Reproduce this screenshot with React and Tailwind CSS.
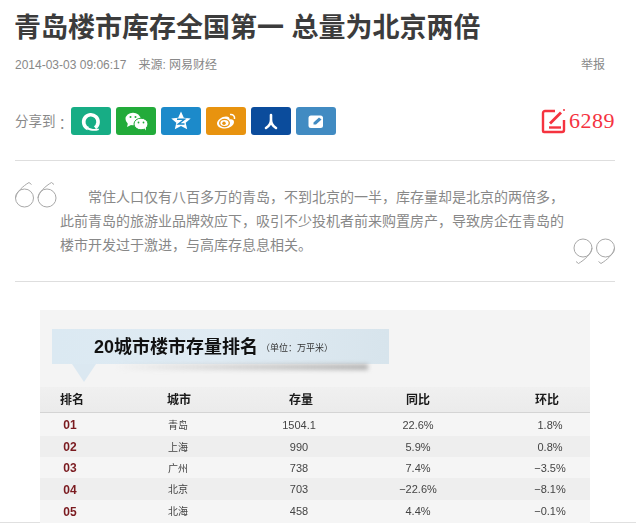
import React from 'react'

const rows = [
  ['01', '青岛', '1504.1', '22.6%', '1.8%', 'h-[23px] pt-px bg-[#f5f5f5]'],
  ['02', '上海', '990', '5.9%', '0.8%', 'h-[21px] pt-px bg-[#eeeeee]'],
  ['03', '广州', '738', '7.4%', '−3.5%', 'h-[21px] pt-px bg-[#f5f5f5]'],
  ['04', '北京', '703', '−22.6%', '−8.1%', 'h-[22px] pt-px bg-[#eeeeee]'],
  ['05', '北海', '458', '4.4%', '−0.1%', 'h-[23px] bg-[#f5f5f5]'],
]

const ShareIcons = [
  {
    bg: 'bg-[#17ad85]',
    icon: (
      <>
        <path d="M17 21.500A7.200 7.200 0 1 1 24 20.800" fill="none" stroke="#fff" strokeWidth="3.600" />
        <path d="M17 20c3 2.200 7 2.600 10.500 1.500l.5 1.500c-4 1.400-8.500 1-11.500-.5z" fill="#fff" />
      </>
    ),
  },
  {
    bg: 'bg-[#22ab3a]',
    icon: (
      <>
        <ellipse cx="17" cy="12" rx="7.500" ry="6.300" fill="#fff" />
        <path d="M12 16l-1 4 4-2z" fill="#fff" />
        <circle cx="14.500" cy="10" r="1" fill="#22ab3a" />
        <circle cx="19.500" cy="10" r="1" fill="#22ab3a" />
        <ellipse cx="25" cy="17" rx="7" ry="5.800" fill="#fff" stroke="#22ab3a" />
        <path d="M28 21l2 2.500-.2-4z" fill="#fff" />
        <circle cx="22.500" cy="15.500" r=".9" fill="#22ab3a" />
        <circle cx="27.500" cy="15.500" r=".9" fill="#22ab3a" />
      </>
    ),
  },
  {
    bg: 'bg-[#1c8aca]',
    icon: (
      <>
        <path d="M20 4.500l2.800 6.200 6.900.7-5 4.300 1.500 6.600-6.200-3.400-6.200 3.400 1.500-6.600-5-4.300 6.900-.7z" fill="#fff" />
        <path d="M16 12.300h7.500l-6 4.700h6" fill="none" stroke="#1c8aca" strokeWidth="1.500" />
      </>
    ),
  },
  {
    bg: 'bg-[#e8930f]',
    icon: (
      <>
        <path d="M11 16.500c0-3.500 5-7 9-7 3 0 4 1.500 3.500 3 2.500-.5 4.500.3 4.500 2.500 0 3.500-4.500 6.500-9 6.500-4.500 0-8-2-8-5z" fill="#fff" />
        <ellipse cx="18.500" cy="16" rx="4.800" ry="3.600" fill="none" stroke="#e8930f" strokeWidth="1.300" />
        <circle cx="18" cy="16.200" r="1.700" fill="#e8930f" />
        <path d="M24 7.500c3-.5 5 1.500 4.500 4.500" fill="none" stroke="#fff" strokeWidth="1.500" />
      </>
    ),
  },
  {
    bg: 'bg-[#0b4c9c]',
    icon: (
      <path d="M20 8v5c0 3-2 6-5 8M20 13c0 3 2 6 5 8" fill="none" stroke="#fff" strokeWidth="2.600" strokeLinecap="round" />
    ),
  },
  {
    bg: 'bg-[#418bc2]',
    icon: (
      <>
        <rect x="12.500" y="8.500" width="14.500" height="12.500" rx="2.500" fill="#fff" />
        <path d="M17.500 15.500l5.500-5 2.500 2-5.500 5h-2.500z" fill="#418bc2" />
      </>
    ),
  },
]

function Quote({ flip }) {
  return (
    <svg
      width="42"
      height="26"
      viewBox="0 0 42 26"
      fill="none"
      stroke="#a8a8a8"
      strokeWidth="1"
      className={flip ? 'rotate-180' : ''}
    >
      <circle cx="9.500" cy="16" r="9" />
      <path d="M.5 16C1.500 10 8 4 14 .5l2.500 2" />
      <circle cx="32" cy="16" r="9" />
      <path d="M23 16C24 10 30.500 4 36.500 .5l2.500 2" />
    </svg>
  )
}

export default function App() {
  return (
    <div
      className="relative h-[523px] overflow-hidden bg-white pl-[15px] pr-[21px] pt-[9px] text-[#888]"
      style={{ fontFamily: '"Liberation Sans", "Noto Sans CJK SC", sans-serif' }}
    >
      <div className="absolute bottom-0 left-0 right-0 h-px bg-[#e0e0e0]" />

      <h1 className="-ml-px text-[27px] leading-[38px] font-bold text-[#3c3c3c] whitespace-nowrap">
        青岛楼市库存全国第一 总量为北京两倍
      </h1>

      <div className="mt-2 flex h-5 items-center justify-between text-xs leading-5">
        <div>
          <span>2014-03-03 09:06:17</span>
          <span className="ml-3">来源: 网易财经</span>
        </div>
        <span className="mr-[10px]">举报</span>
      </div>

      <div className="mt-8 flex h-7 items-center">
        <span className="w-[56px] whitespace-nowrap text-[13.500px]">
          分享到<span className="inline-block translate-y-[3px]" style={{ fontFamily: '"Noto Sans CJK TC", sans-serif' }}>：</span>
        </span>
        <div className="flex gap-[5px]">
          {ShareIcons.map((s, i) => (
            <div key={i} className={`h-7 w-10 rounded-[3px] ${s.bg}`}>
              <svg width="40" height="28" viewBox="0 0 40 28">{s.icon}</svg>
            </div>
          ))}
        </div>
        <div className="ml-auto flex items-center gap-[3px] text-[#f5333f]">
          <svg width="25" height="26" viewBox="0 0 25 26" fill="none" stroke="#f5333f" strokeWidth="2.400">
            <path d="M14 3H4a2 2 0 0 0-2 2v18a1 1 0 0 0 1 1h18a2 2 0 0 0 2-2V12" />
            <path d="M8 19.500h12" />
            <path d="M9 15.500 20 4.500" strokeWidth="2.800" />
            <circle cx="23" cy="2" r="1" fill="#f5333f" stroke="none" />
          </svg>
          <span className="text-[22px] leading-7 tracking-[0.5px]" style={{ fontFamily: '"Liberation Serif", serif' }}>6289</span>
        </div>
      </div>

      <div className="relative mt-[25px] border-y border-[#dedede] pl-[45px] pr-[50px] py-6 text-sm leading-6">
        <div className="absolute left-0 top-[21px]"><Quote /></div>
        <p className="w-[504px] indent-7">
          常住人口仅有八百多万的青岛，不到北京的一半，库存量却是北京的两倍多，此前青岛的旅游业品牌效应下，吸引不少投机者前来购置房产，导致房企在青岛的楼市开发过于激进，与高库存息息相关。
        </p>
        <div className="absolute right-0 top-[77px]"><Quote flip /></div>
      </div>

      <div className="relative mx-[25px] mt-[28px] h-[213px] bg-[#f4f4f4] pt-[19px] blur-[0.3px]">
        <div className="relative ml-3 flex h-[35px] w-[337px] items-center bg-gradient-to-r from-[#dbe9f2] via-[#e0ebf3] to-[#d7e4ec] pl-[42px]">
          <div className="absolute left-[60px] right-[21px] top-[35px] h-[6px] bg-gradient-to-r from-transparent to-[#b4b4b4] blur-[2px]" />
          <span className="text-lg leading-none font-bold text-[#111]">20城市楼市存量排名</span>
          <span className="ml-[3px] mt-1 text-[9px] text-[#333]">（单位：万平米）</span>
          <div className="absolute left-[20px] top-[35px] h-0 w-0 border-x-[12px] border-t-[18px] border-x-transparent border-t-[#dbe8f1]" />
        </div>

        <div className="mt-[23px] grid h-[26px] grid-cols-[64px_150px_94px_140px_102px] items-center border-b border-[#d4d4d4] bg-gradient-to-b from-[#f0f0f0] to-[#ebebeb] text-center text-xs font-bold text-[#1a1a1a]">
          <span>排名</span>
          <span>城市</span>
          <span>存量</span>
          <span>同比</span>
          <span className="pl-4">环比</span>
        </div>

        {rows.map(([rank, city, stock, yoy, mom, cls]) => (
          <div key={rank} className={`grid grid-cols-[64px_150px_94px_140px_102px] items-center text-center text-[11px] text-[#444] ${cls}`}>
            <span className="pr-1 text-xs font-bold text-[#7a1a1f]">{rank}</span>
            <span className="pr-0.5 text-[10px]">{city}</span>
            <span className="pr-1">{stock}</span>
            <span>{yoy}</span>
            <span className="pl-[22px]">{mom}</span>
          </div>
        ))}
      </div>
    </div>
  )
}
